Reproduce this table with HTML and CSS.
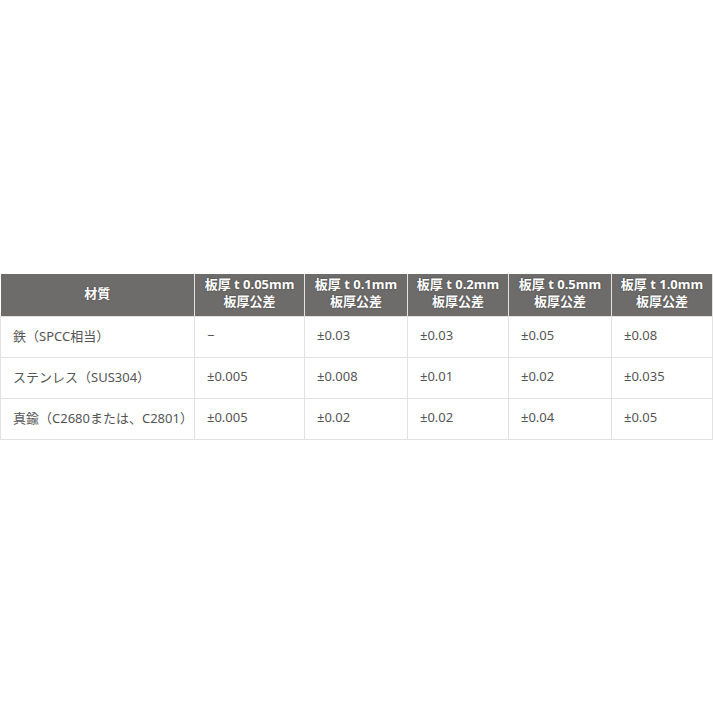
FILE: index.html
```html
<!DOCTYPE html>
<html lang="ja">
<head>
<meta charset="utf-8">
<link rel="stylesheet" href="styles.css">
</head>
<body>
<div class="page">
<table class="spec">
  <colgroup>
    <col class="c1"><col class="c2"><col class="c3"><col class="c4"><col class="c5"><col class="c6">
  </colgroup>
  <thead>
    <tr>
      <th>材質</th>
      <th>板厚 t 0.05mm<br>板厚公差</th>
      <th>板厚 t 0.1mm<br>板厚公差</th>
      <th>板厚 t 0.2mm<br>板厚公差</th>
      <th>板厚 t 0.5mm<br>板厚公差</th>
      <th>板厚 t 1.0mm<br>板厚公差</th>
    </tr>
  </thead>
  <tbody>
    <tr><td>鉄（SPCC相当）</td><td>−</td><td>±0.03</td><td>±0.03</td><td>±0.05</td><td>±0.08</td></tr>
    <tr><td>ステンレス（SUS304）</td><td>±0.005</td><td>±0.008</td><td>±0.01</td><td>±0.02</td><td>±0.035</td></tr>
    <tr><td>真鍮（C2680または、C2801）</td><td>±0.005</td><td>±0.02</td><td>±0.02</td><td>±0.04</td><td>±0.05</td></tr>
  </tbody>
</table>
</div>
</body>
</html>
```

FILE: styles.css
```css
html, body {
  margin: 0;
  padding: 0;
  background: #ffffff;
}
.page {
  padding-top: 274px;
  width: 713px;
}
.spec {
  border-collapse: collapse;
  width: 712px;
  table-layout: fixed;
  font-family: "Noto Sans", "Noto Sans CJK JP", sans-serif;
  font-size: 13px;
  color: #555555;
}
.c1 { width: 194px; }
.c2 { width: 110px; }
.c3 { width: 103px; }
.c4 { width: 101px; }
.c5 { width: 103px; }
.c6 { width: 101px; }
.spec th {
  background: #6e6c6b;
  color: #ffffff;
  font-weight: bold;
  font-size: 13px;
  line-height: 17px;
  height: 42px;
  padding: 0 2px 3px;
  box-sizing: border-box;
  text-align: center;
  white-space: nowrap;
  border: 1px solid #e2e2e2;
  border-top: none;
  text-shadow: 0 0 2px rgba(0, 0, 0, 0.45);
}
.spec th:first-child { border-left: none; }
.spec td {
  height: 41px;
  box-sizing: border-box;
  padding: 0 12px 3px;
  border: 1px solid #e2e2e2;
  text-align: left;
  white-space: nowrap;
}
```
